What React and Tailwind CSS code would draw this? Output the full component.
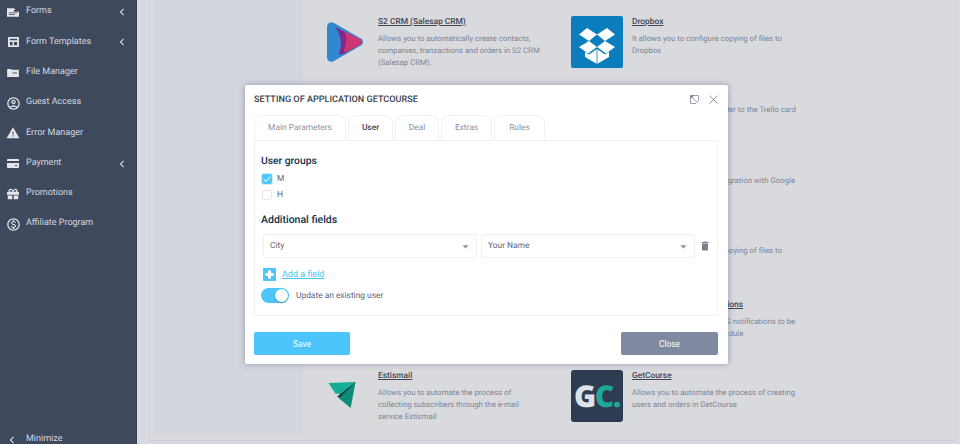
import React from 'react'
import { MdOutlineAccountCircle, MdWarning, MdOutlineMonetizationOn, MdDelete, MdChevronLeft, MdArrowDropDown, MdCheck } from 'react-icons/md'
import { FaGift } from 'react-icons/fa'

const FormsIcon = () => (
    <svg viewBox="0 0 14 10" className="w-[12px] h-[9px]" fill="currentColor">
        <path d="M0 0h8l2 2h-2v2h6v6H0z" />
        <path d="M2 5h10v1H2zM2 7h7v1H2z" fill="#3f495e" />
    </svg>
)

const TemplateIcon = () => (
    <svg viewBox="0 0 12 11" className="w-[11px] h-[10px]" fill="currentColor">
        <path fillRule="evenodd" d="M0 0h12v11H0zM2 2v1.500h8V2zM2 5.500V9h3V5.500zM6.500 5.500V9H10V5.500z" />
    </svg>
)

const FolderIcon = () => (
    <svg viewBox="0 0 13 10" className="w-[12px] h-[9px]" fill="currentColor">
        <path d="M0 1h4l1 1h8v8H0z" />
        <path d="M6 5h5v1H6z" fill="#3f495e" />
    </svg>
)

const CardIcon = () => (
    <svg viewBox="0 0 12 9" className="w-[12px] h-[9px]" fill="currentColor">
        <path d="M1 0h10a1 1 0 0 1 1 1v1H0V1a1 1 0 0 1 1-1zM0 4h12v4a1 1 0 0 1-1 1H1a1 1 0 0 1-1-1z" />
        <path d="M8 6h2v1H8z" fill="#3f495e" />
    </svg>
)

const ExpandIcon = () => (
    <svg viewBox="0 0 9 9" className="w-[9px] h-[9px]" fill="none" stroke="#777d8a" strokeWidth="0.7">
        <path d="M0.500 3V8.500H6M3 0.500H8.500V6M1 1l7 7" />
        <path d="M0.500 0.500h3l-3 3z" fill="#777d8a" />
    </svg>
)

const CloseIcon = () => (
    <svg viewBox="0 0 9 9" className="w-[9px] h-[9px]" fill="none" stroke="#777d8a" strokeWidth="0.8">
        <path d="M0.500 0.500l8 8M8.500 0.500l-8 8" />
    </svg>
)

const PlusIcon = () => (
    <svg viewBox="0 0 13 13" className="w-[13px] h-[13px]">
        <rect width="13" height="13" rx="1" fill="#4bc5fb" />
        <path d="M5 2.500h3V5h2.500v3H8v2.500H5V8H2.500V5H5z" fill="#fff" />
    </svg>
)

const S2Logo = () => (
    <svg viewBox="0 0 36 40" className="w-[36px] h-[40px]">
        <path d="M0 5C0 1 4 -1 7 1L33 16C37 18 37 22 33 24L7 39C4 41 0 39 0 35z" fill="#2f88d0" />
        <path d="M8 5L24 13L24 27L18 31C15 33 12 33 12 31C15 24 15 14 8 5z" fill="#7c2b8c" />
        <path d="M17 9L33 17C36 19 36 21 33 23L20 30C15 30 17 28 18 24C20 18 19 13 17 9z" fill="#cc3672" />
    </svg>
)

const DropboxLogo = () => (
    <svg viewBox="0 0 52 52" className="w-[52px] h-[52px]">
        <rect width="52" height="52" rx="2" fill="#0b7dbd" />
        <path d="M16 12l10 6.500-8 6.500-10-6.500zM36 12l8 6.500-10 6.500-8-6.500zM18 25l8 6-9 6.500-9-6.500zM34 25l10 6-9 6.500-9-6.500z" fill="#fff" />
        <path d="M26 33l8 5.500 4-2.500v5l-12 7-12-7v-5l4 2.500z" fill="#fff" />
        <path d="M26 33v15" stroke="#0b7dbd" strokeWidth="0.800" />
    </svg>
)

const EstismailLogo = () => (
    <svg viewBox="0 0 28 28" className="w-[28px] h-[27px] mr-[6px]">
        <path d="M0 1L28 0L22 14L7 12z" fill="#14ad95" />
        <path d="M28 0L9 15L16 20z" fill="#1f3c44" />
        <path d="M28 0L23 27L11 17z" fill="#0f8c78" />
    </svg>
)

const GcLogo = () => (
    <div className="w-[52px] h-[52px] rounded-[3px] bg-[#2d3c50] flex items-center justify-center overflow-hidden">
        <span className="font-['Open_Sans',sans-serif] font-extrabold text-[30px] tracking-[-1.500px] leading-none text-[#dfe2e6]">
            G<span className="text-[#1fa899]">C.</span>
        </span>
    </div>
)

const menu = [
    { label: 'Forms', icon: <FormsIcon />, arrow: true },
    { label: 'Form Templates', icon: <TemplateIcon />, arrow: true },
    { label: 'File Manager', icon: <FolderIcon /> },
    { label: 'Guest Access', icon: <MdOutlineAccountCircle size={15} /> },
    { label: 'Error Manager', icon: <MdWarning size={14} /> },
    { label: 'Payment', icon: <CardIcon />, arrow: true },
    { label: 'Promotions', icon: <FaGift size={12} /> },
    { label: 'Affiliate Program', icon: <MdOutlineMonetizationOn size={15} /> },
]

// rows behind the dialog on the left stay empty, only their line ends show on the right
const apps = [
    { title: 'S2 CRM (Salesap CRM)', logo: <S2Logo />, lines: ['Allows you to automatically create contacts,', 'companies, transactions and orders in S2 CRM', '(Salesap CRM).'] },
    { title: 'Dropbox', logo: <DropboxLogo />, lines: ['It allows you to configure copying of files to', 'Dropbox'] },
    {},
    { title: 'Trello', lines: ['Allows you to add a new order to the Trello card', 'automatically'] },
    {},
    { title: 'Google Sheets', lines: ['Allows you to configure integration with Google', 'Sheets'] },
    {},
    { title: 'Yandex Disk', lines: ['It allows you to configure copying of files to', 'Yandex Disk'] },
    {},
    { title: 'Automated SMS Notifications', lines: ['Allows you to configure SMS notifications to be', 'sent to clients on a set schedule'] },
    { title: 'Estismail', logo: <EstismailLogo />, lines: ['Allows you to automate the process of', 'collecting subscribers through the e-mail', 'service Estismail'] },
    { title: 'GetCourse', logo: <GcLogo />, lines: ['Allows you to automate the process of creating', 'users and orders in GetCourse'] },
]

const tabs = ['Main Parameters', 'User', 'Deal', 'Extras', 'Rules']
const tabWidths = ['w-[92px]', 'w-[45px]', 'w-[44px]', 'w-[51px]', 'w-[51px]']

function Select({ value }) {
    return (
        <div className="w-[214px] h-[24px] border border-[#eef0f3] rounded-[2px] flex items-center justify-between pl-[6px] pr-[3px] text-[8.400px] text-[#5b6478]">
            <span>{value}</span>
            <MdArrowDropDown size={15} className="text-[#8b92a0]" />
        </div>
    )
}

export default function App() {
    return (
        <div className="relative w-[960px] h-[444px] overflow-hidden flex bg-[#d6d9e0] font-['Roboto',sans-serif] [text-rendering:geometricPrecision]">
            {/* Sidebar */}
            <aside className="w-[137px] h-full shrink-0 bg-[#3f495e] border-r border-[#363f52] text-[#d3d7de] flex flex-col">
                <ul className="-mt-[3px] flex flex-col">
                    {menu.map((item) => (
                        <li key={item.label} className="h-[30.300px] flex items-center text-[9px]">
                            <span className="w-[26px] pl-[2px] pr-[2px] flex justify-center shrink-0 text-[#e4e6ea]">{item.icon}</span>
                            <span className="flex-1">{item.label}</span>
                            {item.arrow && <MdChevronLeft size={14} className="mr-[7px]" />}
                        </li>
                    ))}
                </ul>
                <div className="mt-auto h-[12px] flex items-center text-[9px] -mb-[2px]">
                    <span className="w-[26px] pr-[2px] flex justify-center"><MdChevronLeft size={14} /></span>
                    <span>Minimize</span>
                </div>
            </aside>

            {/* Main panel */}
            <main className="flex-1 pl-[12px] pr-[3px] pb-[3px]">
                <div className="h-full border-r border-b border-l border-[#cdd0d8] bg-[#d9dade] flex pl-[5px] pb-[7px]">
                    <div className="w-[148px] h-full bg-[#d3d6de] shrink-0" />
                    <div className="grid grid-cols-[252px_1fr] auto-rows-[70.800px] pt-[16px] pl-[16px] text-[#7d8496]">
                        {apps.map((app, i) => (
                            <div key={i} className="flex">
                                <div className="w-[52px] h-[52px] shrink-0 flex items-center justify-center">{app.logo}</div>
                                {app.title && (
                                    <div className={`${i % 2 === 0 ? 'ml-[7px]' : 'ml-[9px]'} text-[7.800px] leading-[11.800px] whitespace-nowrap`}>
                                        <div className="font-medium text-[8.400px] underline text-[#3f4656] mb-[5px] leading-[12px]">{app.title}</div>
                                        {app.lines.map((line) => <div key={line}>{line}</div>)}
                                    </div>
                                )}
                            </div>
                        ))}
                    </div>
                </div>
            </main>

            {/* Modal */}
            <div className="absolute left-[245px] top-[85px] w-[483px] h-[279px] bg-white rounded-[2px] shadow-[0_0_6px_rgba(70,80,110,0.45)] pl-[9px] pr-[10px] flex flex-col">
                <div className="h-[30px] flex items-center justify-between">
                    <span className="pt-[1px] text-[9.100px] font-medium text-[#3a3f4b]">SETTING OF APPLICATION GETCOURSE</span>
                    <div className="flex items-center gap-[10px] pb-[2px]">
                        <ExpandIcon />
                        <CloseIcon />
                    </div>
                </div>
                <div className="flex h-[25px] gap-[2px]">
                    {tabs.map((tab, i) => (
                        <div
                            key={tab}
                            className={`${tabWidths[i]} pt-[1px] flex items-center justify-center rounded-t-[8px] border border-b-0 border-[#eef2f5] text-[8.400px] ${tab === 'User' ? 'font-medium text-[#3e4657]' : 'text-[#8a91a3]'}`}
                        >
                            {tab}
                        </div>
                    ))}
                </div>
                <div className="h-[176px] border border-[#eef0f3] px-[6px] relative">
                    <h3 className="mt-[13px] text-[10.300px] leading-[14px] font-medium text-[#12304a]">User groups</h3>
                    <div className="mt-[3px] flex items-center h-[16px] text-[8.400px] text-[#5b6478]">
                        <span className="w-[10px] h-[10px] ml-[1px] rounded-[2px] bg-[#4bc5fb] flex items-center justify-center text-white shadow-[0_0_0_1px_#cdeffd]">
                            <MdCheck size={10} />
                        </span>
                        <span className="ml-[5px]">M</span>
                    </div>
                    <div className="flex items-center h-[16px] text-[8.400px] text-[#5b6478]">
                        <span className="w-[10px] h-[10px] ml-[1px] rounded-[2px] border border-[#e3e5ea]" />
                        <span className="ml-[5px]">H</span>
                    </div>
                    <h3 className="mt-[10px] text-[10.500px] leading-[14px] font-medium text-[#12304a]">Additional fields</h3>
                    <div className="mt-[7px] flex items-center gap-[4px] ml-[2px]">
                        <Select value="City" />
                        <Select value="Your Name" />
                        <MdDelete size={12} className="text-[#7a7f89]" />
                    </div>
                    <div className="mt-[10px] ml-[2px] flex items-center h-[13px]">
                        <PlusIcon />
                        <span className="ml-[6px] pt-[2px] text-[9px] underline text-[#4bc5fb]">Add a field</span>
                    </div>
                    <div className="mt-[7px] flex items-center">
                        <span className="w-[28px] h-[15px] rounded-full bg-[#4bc5fb] relative">
                            <span className="absolute right-[1px] top-[1px] w-[13px] h-[13px] rounded-full bg-white shadow-[0_1px_2px_rgba(0,0,0,0.3)]" />
                        </span>
                        <span className="ml-[7px] pt-[1px] text-[8.400px] text-[#5b6478]">Update an existing user</span>
                    </div>
                </div>
                <div className="mt-[16px] flex justify-between">
                    <button className="w-[96px] h-[23px] pt-[1px] rounded-[2px] bg-[#4bc5fb] text-white text-[8.400px]">Save</button>
                    <button className="w-[97px] h-[23px] pt-[1px] rounded-[2px] bg-[#7f8aa1] text-white text-[8.400px]">Close</button>
                </div>
            </div>
        </div>
    )
}
